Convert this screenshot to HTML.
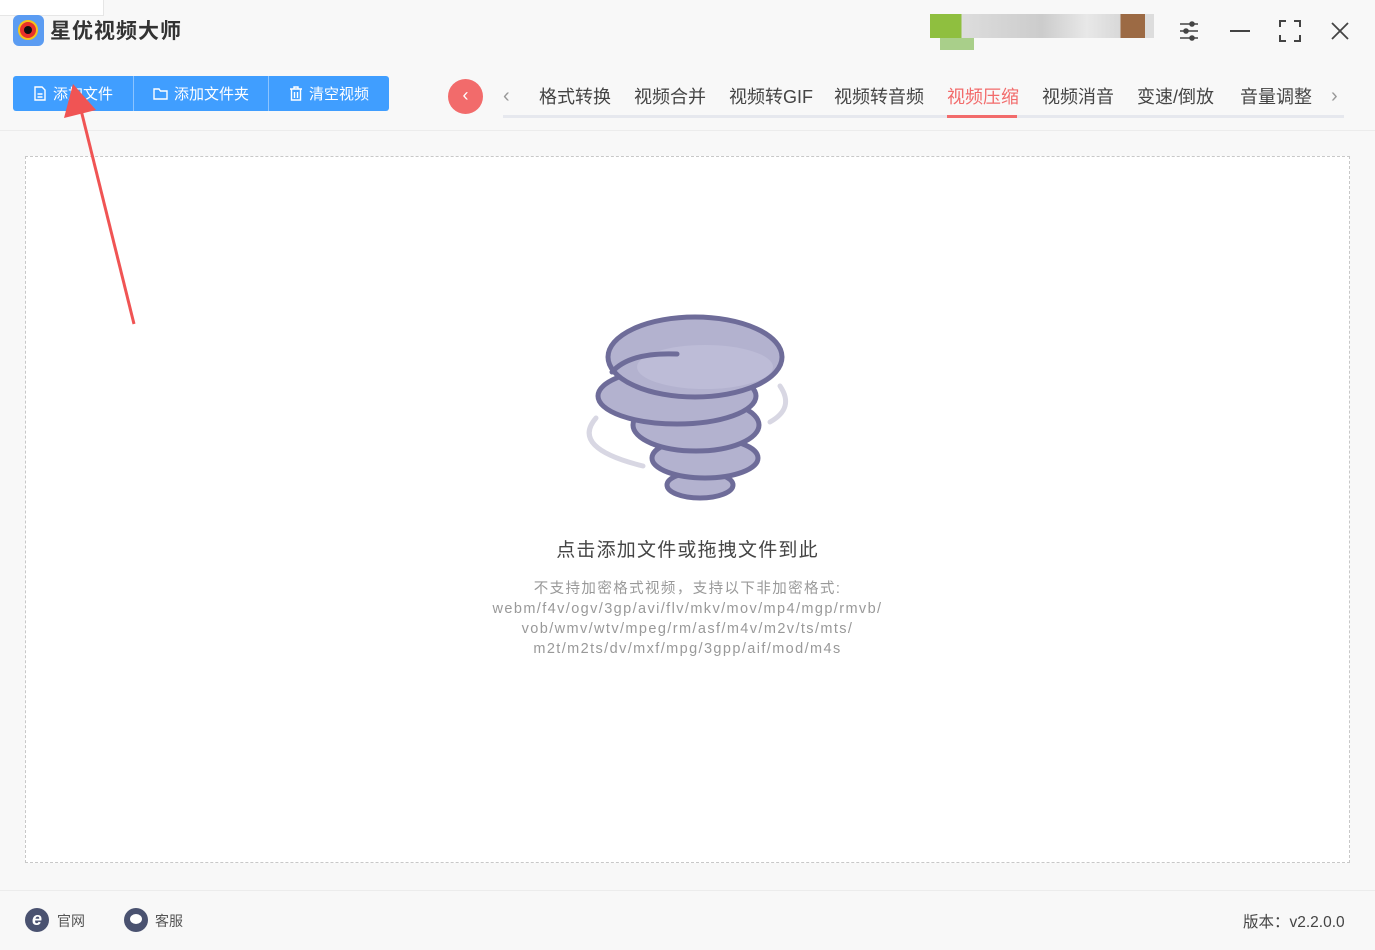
<!DOCTYPE html>
<html><head><meta charset="utf-8"><style>
*{margin:0;padding:0;box-sizing:border-box}
body{width:1375px;height:950px;background:#f8f8f8;font-family:"Liberation Sans","Noto Sans CJK SC",sans-serif;position:relative;overflow:hidden;color:#333}
.abs{position:absolute}
.btns{left:13px;top:76px;width:376px;height:35px;background:#409eff;border-radius:3px;display:flex;color:#fff;font-size:15px}
.btns div{display:flex;align-items:center;justify-content:center;gap:6px;border-right:1px solid #8cc4ff}
.btns div:last-child{border:none}
.tab{position:absolute;top:83px;font-size:18px;color:#444}
</style></head><body>
<div class="abs" style="left:0;top:0;width:104px;height:16px;background:#fff;border:1px solid #e6e6e6;border-top:none;border-left:none"></div>
<div class="abs" style="left:13px;top:15px;width:31px;height:31px;background:#5b9cf2;border-radius:6px"></div>
<div class="abs" style="left:18px;top:20px;width:20px;height:20px;border-radius:50%;background:#e8312b;border:2px solid #f7c21b"></div>
<div class="abs" style="left:24px;top:26px;width:8px;height:8px;border-radius:50%;background:#111"></div>
<div class="abs" style="left:50px;top:15px;font-size:21px;font-weight:bold;color:#333;letter-spacing:1px">星优视频大师</div>

<div class="abs" style="left:930px;top:14px;width:224px;height:24px;background:linear-gradient(90deg,#8fbf3f 0,#8fbf3f 14%,#ddd 14%,#ccc 50%,#e8e8e8 70%,#d8d8d8 85%,#9c6a44 85%,#9c6a44 96%,#ddd 96%)"></div>
<div class="abs" style="left:940px;top:38px;width:34px;height:12px;background:#a9cf8a"></div>
<svg class="abs" style="left:1176px;top:18px" width="26" height="26" viewBox="0 0 26 26" stroke="#444" stroke-width="1.6" fill="none"><path d="M4 6h18M4 13h18M4 20h18"/><circle cx="16" cy="6" r="2" fill="#444"/><circle cx="10" cy="13" r="2" fill="#444"/><circle cx="16" cy="20" r="2" fill="#444"/></svg>
<div class="abs" style="left:1230px;top:30px;width:20px;height:2px;background:#444"></div>
<svg class="abs" style="left:1278px;top:19px" width="24" height="24" viewBox="0 0 24 24" stroke="#444" stroke-width="2" fill="none"><path d="M2 8V2h6M16 2h6v6M22 16v6h-6M8 22H2v-6"/></svg>
<svg class="abs" style="left:1330px;top:21px" width="20" height="20" viewBox="0 0 20 20" stroke="#444" stroke-width="1.8"><path d="M2 2L18 18M18 2L2 18"/></svg>

<div class="abs btns">
<div style="width:121px"><svg width="14" height="15" viewBox="0 0 14 15" fill="none" stroke="#fff" stroke-width="1.4"><path d="M2 1h7l3 3v10H2z M4.5 8h5M4.5 11h5"/></svg>添加文件</div>
<div style="width:135px"><svg width="15" height="13" viewBox="0 0 15 13" fill="none" stroke="#fff" stroke-width="1.4"><path d="M1 2h5l1.5 2H14v8H1z"/></svg>添加文件夹</div>
<div style="width:120px"><svg width="14" height="15" viewBox="0 0 14 15" fill="none" stroke="#fff" stroke-width="1.4"><path d="M1 3h12M5 3V1h4v2M2.5 3v11h9V3M5.5 6v6M8.5 6v6"/></svg>清空视频</div>
</div>

<div class="abs" style="left:448px;top:79px;width:35px;height:35px;border-radius:50%;background:#f26b6b;color:#fff;font-size:18px;text-align:center;line-height:33px">‹</div>
<div class="abs" style="left:503px;top:85px;color:#999;font-size:20px">‹</div>
<div class="abs" style="left:1331px;top:85px;color:#999;font-size:20px">›</div>
<div class="abs" style="left:503px;top:115px;width:841px;height:3px;background:#e6e8ee"></div>
<div class="abs" style="left:947px;top:115px;width:70px;height:3px;background:#f26b6b"></div>
<div class="tab" style="left:539px">格式转换</div>
<div class="tab" style="left:634px">视频合并</div>
<div class="tab" style="left:729px">视频转GIF</div>
<div class="tab" style="left:834px">视频转音频</div>
<div class="tab" style="left:947px;color:#f26b6b">视频压缩</div>
<div class="tab" style="left:1042px">视频消音</div>
<div class="tab" style="left:1137px">变速/倒放</div>
<div class="tab" style="left:1240px">音量调整</div>
<div class="abs" style="left:0;top:130px;width:1375px;height:1px;background:#ececec"></div>

<div class="abs" style="left:25px;top:156px;width:1325px;height:707px;background:#fff;border:1px dashed #c8c8c8"></div>

<svg class="abs" style="left:0;top:0" width="1375" height="950">
<g fill="none" stroke="#d8d7e3" stroke-width="5" stroke-linecap="round"><path d="M596 418 Q570 448 643 466"/><path d="M780 386 Q795 408 770 422"/></g>
<g stroke="#6e6c99" stroke-width="5" fill="#b3b2cf">
<ellipse cx="700" cy="485" rx="33" ry="13"/>
<ellipse cx="705" cy="458" rx="53" ry="20"/>
<ellipse cx="696" cy="425" rx="63" ry="26"/>
<ellipse cx="677" cy="396" rx="79" ry="28"/>
<ellipse cx="695" cy="357" rx="87" ry="40"/>
</g>
<ellipse cx="705" cy="367" rx="68" ry="22" fill="#bdbcd7"/>
<path d="M612 372 Q630 352 677 354" fill="none" stroke="#6e6c99" stroke-width="5" stroke-linecap="round"/>
<line x1="134" y1="324" x2="81" y2="110" stroke="#f05454" stroke-width="3"/>
<polygon points="73,84 64,118 96,110" fill="#f05454"/>
</svg>

<div class="abs" style="left:0;width:1375px;top:535px;text-align:center;font-size:19px;letter-spacing:1.2px;color:#444">点击添加文件或拖拽文件到此</div>
<div class="abs" style="left:0;width:1375px;top:579px;text-align:center;font-size:14.5px;letter-spacing:1.4px;color:#999;line-height:20px">不支持加密格式视频，支持以下非加密格式:<br>webm/f4v/ogv/3gp/avi/flv/mkv/mov/mp4/mgp/rmvb/<br>vob/wmv/wtv/mpeg/rm/asf/m4v/m2v/ts/mts/<br>m2t/m2ts/dv/mxf/mpg/3gpp/aif/mod/m4s</div>

<div class="abs" style="left:0;top:890px;width:1375px;height:1px;background:#ececec"></div>
<div class="abs" style="left:25px;top:908px;width:24px;height:24px;border-radius:50%;background:#4a5270;color:#fff;font-size:18px;font-style:italic;font-weight:bold;text-align:center;line-height:22px">e</div>
<div class="abs" style="left:57px;top:911px;font-size:14px;color:#555">官网</div>
<div class="abs" style="left:124px;top:908px;width:24px;height:24px;border-radius:50%;background:#4a5270"></div>
<div class="abs" style="left:130px;top:914px;width:12px;height:10px;border-radius:50%;background:#fff"></div>
<div class="abs" style="left:155px;top:911px;font-size:14px;color:#555">客服</div>
<div class="abs" style="left:1243px;top:910px;font-size:15.5px;color:#444">版本：v2.2.0.0</div>
</body></html>
